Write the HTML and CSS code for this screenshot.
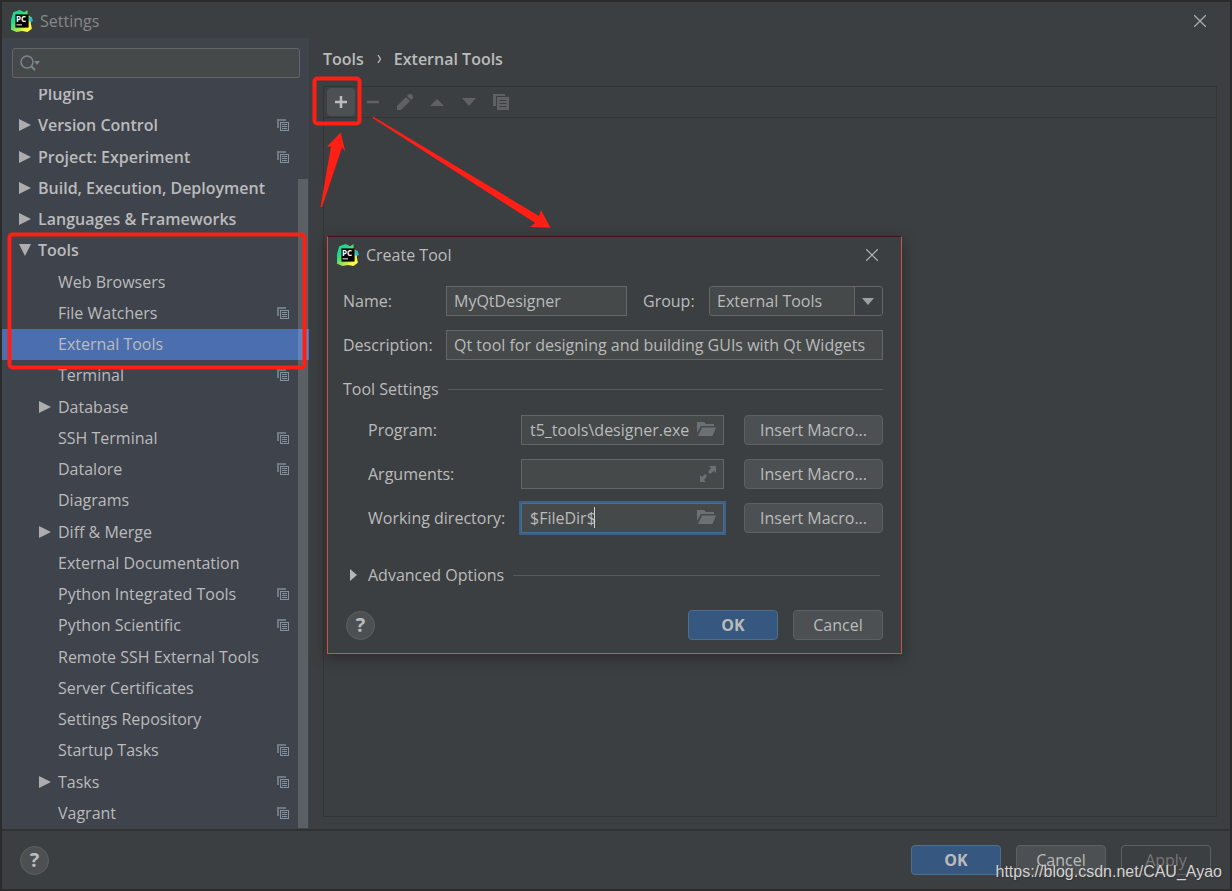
FILE: index.html
```html
<!DOCTYPE html>
<html lang="en">
<head>
<meta charset="utf-8">
<title>Settings</title>
<link rel="stylesheet" href="styles.css">
</head>
<body>
<svg class="defs" width="0" height="0" aria-hidden="true">
  <defs>
    <linearGradient id="pc-g" x1="0" y1="0" x2="1" y2="1">
      <stop offset="0.3" stop-color="#21d789"/><stop offset="0.65" stop-color="#b8e84a"/><stop offset="0.8" stop-color="#fcf84a"/>
    </linearGradient>
  </defs>
  <symbol id="i-copy" viewBox="0 0 12 12">
    <path d="M0 0h9v2H2v7H0z" fill="#6f7b84"/>
    <path d="M3 3h9v9H3z" fill="#83919b"/><path d="M4 4h7v7H4z" fill="#3f4552"/>
    <path d="M5 5h5v1H5zM5 7h5v1H5zM5 9h5v1H5z" fill="#83919b"/>
  </symbol>
  <symbol id="i-right" viewBox="0 0 12 12"><path d="M0 0l12 6L0 12z" fill="#adadad"/></symbol>
  <symbol id="i-down" viewBox="0 0 12 12"><path d="M0 0h12L6 12z" fill="#adadad"/></symbol>
  <symbol id="i-close" viewBox="0 0 12 12"><path d="M0 0l12 12M12 0L0 12" stroke="#a9abac" stroke-width="1.3" fill="none"/></symbol>
  <symbol id="i-folder" viewBox="0 0 19 15">
    <path d="M0 0h7l2 2h8v2H4L0 11z" fill="#6d7073"/><path d="M5 5.500h14L15.500 14H1z" fill="#6d7073"/>
  </symbol>
  <symbol id="i-pycharm" viewBox="0 0 20 20">
    <path d="M2 2L8 0l4 2 3-2v4l4 3-1 5 1 5-4 3-5-1-5 1-5-2V9z" fill="url(#pc-g)"/>
    <path d="M16 6l3 1 1 3-3 1z" fill="#22b8e8"/>
    <path d="M4 4h12v12H4z" fill="#000"/><path d="M5 13h5v1H5z" fill="#ddd"/>
  </symbol>
</svg>

<main class="window">
  <header class="titlebar">
    <div class="logo"><svg><use href="#i-pycharm"/></svg><span>PC</span></div>
    <h1 class="title">Settings</h1>
    <button class="close" aria-label="Close settings"><svg><use href="#i-close"/></svg></button>
  </header>

  <div class="body">
    <aside class="sidebar">
      <label class="search">
        <svg viewBox="0 0 22 16"><circle cx="7" cy="7" r="6" fill="none" stroke="#7a868e" stroke-width="1.500"/><path d="M11 11l4 4" stroke="#7a868e" stroke-width="2"/><path d="M14 6h6l-3 4z" fill="#7a868e"/></svg>
        <input type="text" aria-label="Search settings">
      </label>
      <nav class="tree-view" aria-label="Settings categories">
        <ul class="tree">
          <li class="row top">Plugins</li>
          <li class="row top"><svg class="arrow"><use href="#i-right"/></svg>Version Control<svg class="copy"><use href="#i-copy"/></svg></li>
          <li class="row top"><svg class="arrow"><use href="#i-right"/></svg>Project: Experiment<svg class="copy"><use href="#i-copy"/></svg></li>
          <li class="row top"><svg class="arrow"><use href="#i-right"/></svg>Build, Execution, Deployment</li>
          <li class="row top"><svg class="arrow"><use href="#i-right"/></svg>Languages &amp; Frameworks</li>
          <li class="row top"><svg class="arrow"><use href="#i-down"/></svg>Tools</li>
          <li class="row">Web Browsers</li>
          <li class="row">File Watchers<svg class="copy"><use href="#i-copy"/></svg></li>
          <li class="row selected">External Tools</li>
          <li class="row">Terminal<svg class="copy"><use href="#i-copy"/></svg></li>
          <li class="row"><svg class="arrow"><use href="#i-right"/></svg>Database</li>
          <li class="row">SSH Terminal<svg class="copy"><use href="#i-copy"/></svg></li>
          <li class="row">Datalore<svg class="copy"><use href="#i-copy"/></svg></li>
          <li class="row">Diagrams</li>
          <li class="row"><svg class="arrow"><use href="#i-right"/></svg>Diff &amp; Merge</li>
          <li class="row">External Documentation</li>
          <li class="row">Python Integrated Tools<svg class="copy"><use href="#i-copy"/></svg></li>
          <li class="row">Python Scientific<svg class="copy"><use href="#i-copy"/></svg></li>
          <li class="row">Remote SSH External Tools</li>
          <li class="row">Server Certificates</li>
          <li class="row">Settings Repository</li>
          <li class="row">Startup Tasks<svg class="copy"><use href="#i-copy"/></svg></li>
          <li class="row"><svg class="arrow"><use href="#i-right"/></svg>Tasks<svg class="copy"><use href="#i-copy"/></svg></li>
          <li class="row">Vagrant<svg class="copy"><use href="#i-copy"/></svg></li>
        </ul>
        <div class="scrollbar"></div>
      </nav>
    </aside>

    <section class="content">
      <h2 class="crumbs"><span>Tools</span><svg viewBox="0 0 5 8"><path d="M1 0l2.500 4L1 8" fill="none" stroke="#bbb" stroke-width="1.300"/></svg><span>External Tools</span></h2>
      <div class="panel">
        <div class="toolbar">
          <button class="tool add" aria-label="Add"><svg viewBox="0 0 16 16"><path d="M8 2v12M2 8h12" stroke="#bbbdbe" stroke-width="2.500"/></svg></button>
          <button class="tool" aria-label="Remove" disabled><svg viewBox="0 0 16 16"><path d="M2 8h12" stroke="#5f6162" stroke-width="2.500"/></svg></button>
          <button class="tool" aria-label="Edit" disabled><svg viewBox="0 0 16 16"><path d="M0 12L9 3l4 4L4 16H0zM10 2l2-2h2l2 2v2l-2 2z" fill="#5f6162"/></svg></button>
          <button class="tool" aria-label="Move up" disabled><svg viewBox="0 0 16 16"><path d="M1 12l7-7 7 7z" fill="#5f6162"/></svg></button>
          <button class="tool" aria-label="Move down" disabled><svg viewBox="0 0 16 16"><path d="M1 4h14l-7 8z" fill="#5f6162"/></svg></button>
          <button class="tool" aria-label="Copy" disabled><svg viewBox="0 0 16 16"><path d="M0 0h12v2H3v10H0zM4 3h12v13H4z" fill="#5f6162"/><path d="M6.500 6.500h7M6.500 9.500h7M6.500 12.500h7" stroke="#3c3f41"/></svg></button>
        </div>
      </div>
    </section>
  </div>

  <footer class="footer">
    <button class="help" aria-label="Help">?</button>
    <div class="actions">
      <button class="btn primary">OK</button>
      <button class="btn">Cancel</button>
      <button class="btn off" disabled>Apply</button>
    </div>
  </footer>
</main>

<form class="dialog" role="dialog" aria-label="Create Tool">
  <header class="dialog-title">
    <div class="logo"><svg><use href="#i-pycharm"/></svg><span>PC</span></div>
    <h2 class="title">Create Tool</h2>
    <button type="button" class="close" aria-label="Close dialog"><svg><use href="#i-close"/></svg></button>
  </header>
  <div class="dialog-body">
    <div class="line">
      <label class="cap" for="name">Name:</label>
      <div class="field name"><input id="name" type="text" value="MyQtDesigner"></div>
      <label class="group-cap" for="group">Group:</label>
      <div class="combo">
        <select id="group"><option>External Tools</option></select>
        <svg viewBox="0 0 12 7"><path d="M0 0h12L6 7z" fill="#9da0a2"/></svg>
      </div>
    </div>
    <div class="line">
      <label class="cap" for="desc">Description:</label>
      <div class="field"><input id="desc" type="text" value="Qt tool for designing and building GUIs with Qt Widgets"></div>
    </div>
    <fieldset class="settings">
      <legend class="section"><span>Tool Settings</span></legend>
      <div class="line inner">
        <label class="cap" for="prog">Program:</label>
        <div class="field"><input id="prog" type="text" value="t5_tools\designer.exe"><svg class="folder"><use href="#i-folder"/></svg></div>
        <button type="button" class="btn macro">Insert Macro...</button>
      </div>
      <div class="line inner">
        <label class="cap" for="args">Arguments:</label>
        <div class="field"><input id="args" type="text"><svg class="expand" viewBox="0 0 16 16"><path d="M9 0h7v7l-2-2-4 3-2-2 3-4zM0 9l2 2 3-3 2 2-3 4 2 2H0z" fill="#6d7073"/></svg></div>
        <button type="button" class="btn macro">Insert Macro...</button>
      </div>
      <div class="line inner">
        <label class="cap" for="wd">Working directory:</label>
        <div class="field focused"><input id="wd" type="text" value="$FileDir$"><span class="caret"></span><svg class="folder"><use href="#i-folder"/></svg></div>
        <button type="button" class="btn macro">Insert Macro...</button>
      </div>
    </fieldset>
    <button type="button" class="section advanced"><svg viewBox="0 0 7 12"><path d="M0 0l7 6-7 6z" fill="#b4b6b7"/></svg><span>Advanced Options</span></button>
    <div class="dialog-actions">
      <button type="button" class="help" aria-label="Dialog help">?</button>
      <div class="actions">
        <button type="button" class="btn primary">OK</button>
        <button type="button" class="btn">Cancel</button>
      </div>
    </div>
  </div>
</form>

<svg class="marks" width="560" height="380" viewBox="0 0 560 380" aria-hidden="true">
  <g fill="none" stroke="#ff1f14" stroke-width="4">
    <rect x="314.500" y="78.500" width="45" height="45" rx="3"/>
    <rect x="9.500" y="234.500" width="295" height="133" rx="3"/>
  </g>
  <path d="M320.500 207L331 146.500 327 146.500 340.700 132.500 345.300 151.500 342 147.500 322 207zM373 116.500L539 216 541 210 550.500 227.700 530 227 535.300 223 372.500 118z" fill="#ff1f14"/>
</svg>
<p class="watermark">https://blog.csdn.net/CAU_Ayao</p>
</body>
</html>
```
FILE: styles.css
```css
* { box-sizing: border-box; }
body {
  margin: 0;
  min-height: 100vh;
  padding: 2px;
  display: flex;
  background: #2b2b2b;
  color: #bbbbbb;
  font: 16px/24px "Open Sans", "Noto Sans", sans-serif;
}
button, input, select { font: inherit; color: inherit; margin: 0; }
button { padding: 0; border: 0; background: none; }
h1, h2, p, ul { margin: 0; padding: 0; font: inherit; }
.defs { position: absolute; }

.window { flex: 1; display: flex; flex-direction: column; background: #3c3f41; }
.titlebar { display: flex; align-items: center; height: 36px; padding: 1px 24px 0 9px; color: #858789; }
.logo { position: relative; width: 22px; height: 22px; margin-right: 7px; }
.logo svg { width: 22px; height: 22px; display: block; }
.logo span { position: absolute; left: 5px; top: 4px; font-size: 8px; line-height: 9px; font-weight: bold; color: #ffffff; }
.title { flex: 1; }
.close { width: 12px; height: 12px; display: flex; }
.close svg { width: 12px; height: 12px; }

.body { flex: 1; display: flex; border-bottom: 2px solid #323232; }
.sidebar { width: 307px; display: flex; flex-direction: column; background: #3f434c; }
.search {
  display: flex; align-items: center;
  height: 30px; margin: 10px 9px 0 10px; padding: 0 7px;
  background: #45494a; border: 1px solid #646668; border-radius: 3px;
}
.search svg { width: 22px; height: 16px; }
.search input { flex: 1; min-width: 0; border: 0; background: none; outline: 0; }
.tree-view { flex: 1; display: flex; overflow: hidden; position: relative; margin-top: 11px; }
.tree { flex: 1; display: grid; grid-auto-rows: 1fr; margin-top: -10px; list-style: none; }
.row { display: flex; align-items: center; position: relative; padding: 0 20px 1px 56px; }
.row.top { padding-left: 36px; font-weight: 600; }
.row.selected { background: #4b6eaf; }
.arrow { width: 12px; height: 12px; margin-left: -19px; margin-right: 7px; }
.copy { width: 12px; height: 12px; margin-left: auto; }
.scrollbar { position: absolute; right: 1px; top: 90px; bottom: 1px; width: 10px; background: rgba(255, 255, 255, 0.15); }

.content { flex: 1; display: flex; flex-direction: column; padding: 9px 13px 12px 14px; }
.crumbs { display: flex; align-items: center; font-weight: 600; }
.crumbs svg { width: 5px; height: 8px; margin: 0 12px 0 13px; }
.panel { flex: 1; margin-top: 15px; border: 1px solid #323435; }
.toolbar { display: flex; align-items: center; gap: 4px; height: 31px; padding-left: 3px; border-bottom: 1px solid #323435; }
.tool { width: 28px; height: 28px; display: grid; place-items: center; border-radius: 4px; }
.tool svg { width: 16px; height: 16px; }
.tool.add { background: #4c5052; }

.footer { display: flex; align-items: center; justify-content: space-between; height: 58px; padding: 0 19px 0 18px; }
.actions { display: flex; gap: 15px; }
.btn {
  width: 90px; height: 30px;
  background: #4c5052; border: 1px solid #5e6060; border-radius: 4px;
}
.btn.primary { background: #365880; border-color: #4c708c; font-weight: bold; }
.btn.off { background: none; color: #777777; }
.btn.macro { width: 139px; }
.help {
  width: 29px; height: 29px;
  background: #4c5052; border: 1px solid #5e6060; border-radius: 50%;
  font-size: 20px; font-weight: bold;
}

.dialog {
  position: absolute; left: 327px; top: 236px; width: 575px;
  background: #3c3f41; border: 1px solid #c75450; border-top-color: #4a1214;
  box-shadow: 0 4px 14px rgba(0, 0, 0, 0.35);
}
.dialog-title { display: flex; align-items: center; height: 36px; padding: 0 23px 0 9px; }
.dialog-title .logo { margin-right: 7px; }
.dialog-body { display: flex; flex-direction: column; gap: 14px; padding: 13px 18px 13px 15px; }
.line { display: flex; align-items: center; }
.cap { width: 103px; }
.field {
  flex: 1; min-width: 0; height: 30px; position: relative;
  display: flex; align-items: center; padding: 0 7px 1px;
  background: #45494a; border: 1px solid #646668;
}
.field input { flex: 1; min-width: 0; padding: 0; border: 0; background: none; outline: 0; }
.field.name { flex: 0 0 181px; }
.field.focused { border-color: #466d94; box-shadow: 0 0 0 2px #3d6185; }
.group-cap { width: 82px; padding-left: 16px; }
.combo {
  flex: 1; height: 30px; display: flex; align-items: center; position: relative;
  background: linear-gradient(to left, #3c3f41 27px, #646668 27px, #646668 28px, #45494a 28px);
  border: 1px solid #646668; border-radius: 3px;
}
.combo select { appearance: none; width: 100%; padding: 0 30px 0 7px; border: 0; background: none; outline: 0; }
.combo svg { position: absolute; right: 8px; width: 12px; height: 7px; }
.settings { display: flex; flex-direction: column; gap: 14px; min-width: 0; margin: 0; padding: 0; border: 0; }
.section { display: flex; align-items: center; width: 100%; height: 30px; padding: 0; margin-bottom: 11px; }
.section::after { content: ""; flex: 1; height: 1px; margin-left: 9px; background: #57595a; }
.inner { padding-left: 25px; }
.inner .cap { width: 153px; }
.inner .field { padding-left: 8px; }
.macro { margin-left: 20px; }
.folder { width: 19px; height: 15px; margin-left: 8px; }
.expand { width: 16px; height: 16px; }
.caret { position: absolute; left: 72px; top: 3px; width: 1px; height: 21px; background: #d0d0d0; }
.advanced { margin: 13px 0 6px; padding: 0 3px 0 7px; }
.advanced svg { width: 7px; height: 12px; margin-right: 11px; }
.dialog-actions { display: flex; align-items: center; justify-content: space-between; padding-left: 3px; }

.marks { position: absolute; left: 0; top: 0; pointer-events: none; }
.watermark {
  position: absolute; right: 10px; bottom: 8px;
  font: 16px/22px "Liberation Sans", sans-serif;
  color: #d4d4d4; text-shadow: 1px 1px 1px #333333;
}
```
